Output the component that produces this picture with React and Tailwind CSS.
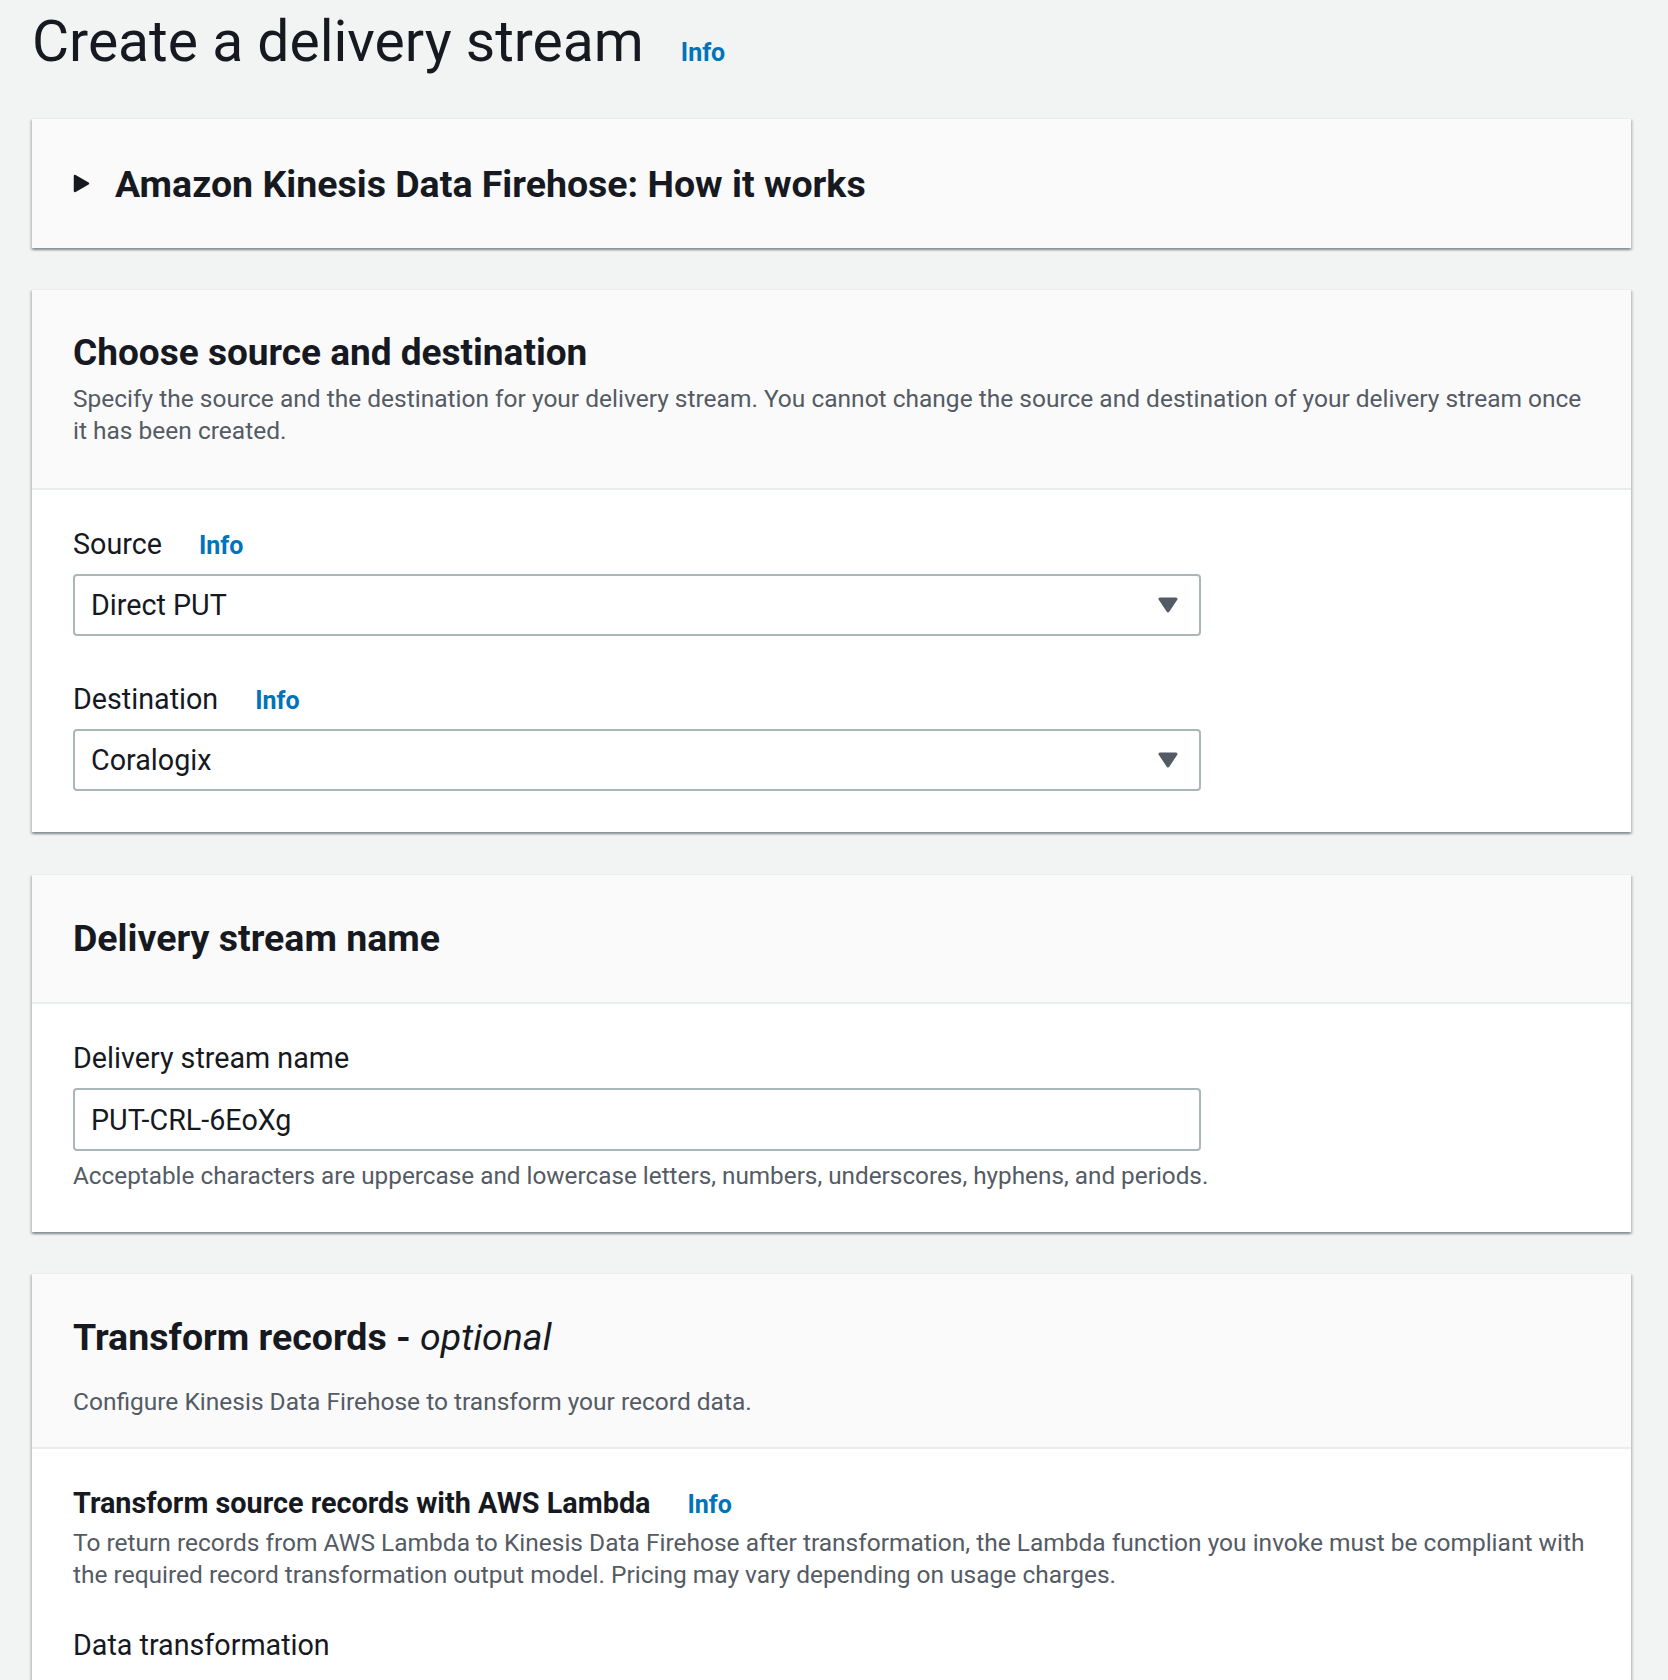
import React from "react";

const Info = () => (
  <span className="ml-[37px] text-[25px] font-bold leading-[36px] text-[#0073bb]">Info</span>
);

const Caret = () => (
  <svg width="20" height="16" viewBox="0 0 20 16" aria-hidden="true">
    <path d="M2 2 H18 L10 14 Z" fill="#545b64" stroke="#545b64" strokeWidth="3" strokeLinejoin="round" />
  </svg>
);

const Select = ({ value }) => (
  <div className="w-[1128px] h-[62px] border-2 border-[#aab7b8] rounded-[4px] bg-white flex items-center justify-between pl-[16px] pr-[21px]">
    <span className="text-[28.7px] leading-[36px]">{value}</span>
    <Caret />
  </div>
);

const shadowCls =
  "border-t border-[#eaeded] shadow-[0_2px_2px_0_rgba(0,28,36,0.3),2px_2px_2px_0_rgba(0,28,36,0.12),-2px_2px_2px_0_rgba(0,28,36,0.12)]";

export default function App() {
  return (
    <div className="min-h-[1680px] overflow-hidden bg-[#f2f3f3] pl-[32px] pr-[37px] pt-[10px] font-['Roboto',sans-serif] text-[#16191f]">
      <div className="flex items-baseline h-[64px]">
        <h1 className="text-[57px] leading-[64px] font-normal">Create a delivery stream</h1>
        <Info />
      </div>

      <div className={"bg-[#fafafa] " + shadowCls + " mt-[44px] h-[130px] flex items-center pl-[41px]"}>
        <svg width="17" height="19" viewBox="0 0 17 19" aria-hidden="true">
          <path d="M2 2 L15 9.5 L2 17 Z" fill="#16191f" stroke="#16191f" strokeWidth="2.5" strokeLinejoin="round" />
        </svg>
        <span className="ml-[25px] text-[37.5px] font-bold leading-[46px]">
          Amazon Kinesis Data Firehose: How it works
        </span>
      </div>

      <div className={"bg-white " + shadowCls + " mt-[41px]"}>
        <div className="bg-[#fafafa] px-[41px] pt-[40px] pb-[41px] border-b-2 border-[#eaeded]">
          <h2 className="text-[37px] font-bold leading-[46px]">Choose source and destination</h2>
          <p className="mt-[7px] text-[24.5px] leading-[32px] text-[#545b64]">
            <span className="block whitespace-nowrap">
              Specify the source and the destination for your delivery stream. You cannot change the source and destination of your delivery stream once
            </span>
            <span className="block">it has been created.</span>
          </p>
        </div>
        <div className="px-[41px] pt-[36px] pb-[41px]">
          <div className="flex items-baseline">
            <span className="text-[28.7px] leading-[36px]">Source</span>
            <Info />
          </div>
          <div className="mt-[10px]">
            <Select value="Direct PUT" />
          </div>
          <div className="flex items-baseline mt-[45px]">
            <span className="text-[28.7px] leading-[36px]">Destination</span>
            <Info />
          </div>
          <div className="mt-[10px]">
            <Select value="Coralogix" />
          </div>
        </div>
      </div>

      <div className={"bg-white " + shadowCls + " mt-[42px]"}>
        <div className="bg-[#fafafa] px-[41px] pt-[40px] pb-[41px] border-b-2 border-[#eaeded]">
          <h2 className="text-[37.5px] font-bold leading-[46px]">Delivery stream name</h2>
        </div>
        <div className="px-[41px] pt-[36px] pb-[40px]">
          <div className="text-[28.7px] leading-[36px]">Delivery stream name</div>
          <div className="mt-[12px] w-[1128px] h-[63px] border-2 border-[#aab7b8] rounded-[4px] bg-white flex items-center pl-[16px]">
            <span className="text-[28.7px] leading-[36px]">PUT-CRL-6EoXg</span>
          </div>
          <p className="mt-[9px] text-[24.3px] leading-[32px] text-[#545b64]">
            Acceptable characters are uppercase and lowercase letters, numbers, underscores, hyphens, and periods.
          </p>
        </div>
      </div>

      <div className={"bg-white " + shadowCls + " mt-[41px]"}>
        <div className="bg-[#fafafa] px-[41px] pt-[40px] pb-[29px] border-b-2 border-[#eaeded]">
          <h2 className="text-[37.5px] font-bold leading-[46px]">
            Transform records - <span className="italic font-normal">optional</span>
          </h2>
          <p className="mt-[26px] text-[24.5px] leading-[32px] text-[#545b64]">
            Configure Kinesis Data Firehose to transform your record data.
          </p>
        </div>
        <div className="px-[41px] pt-[36px] pb-[60px]">
          <div className="flex items-baseline">
            <span className="text-[28.8px] font-bold leading-[36px]">Transform source records with AWS Lambda</span>
            <Info />
          </div>
          <p className="mt-[4px] text-[24.5px] leading-[32px] text-[#545b64]">
            <span className="block whitespace-nowrap">
              To return records from AWS Lambda to Kinesis Data Firehose after transformation, the Lambda function you invoke must be compliant with
            </span>
            <span className="block">the required record transformation output model. Pricing may vary depending on usage charges.</span>
          </p>
          <div className="mt-[36px] text-[28.7px] leading-[36px]">Data transformation</div>
        </div>
      </div>
    </div>
  );
}
